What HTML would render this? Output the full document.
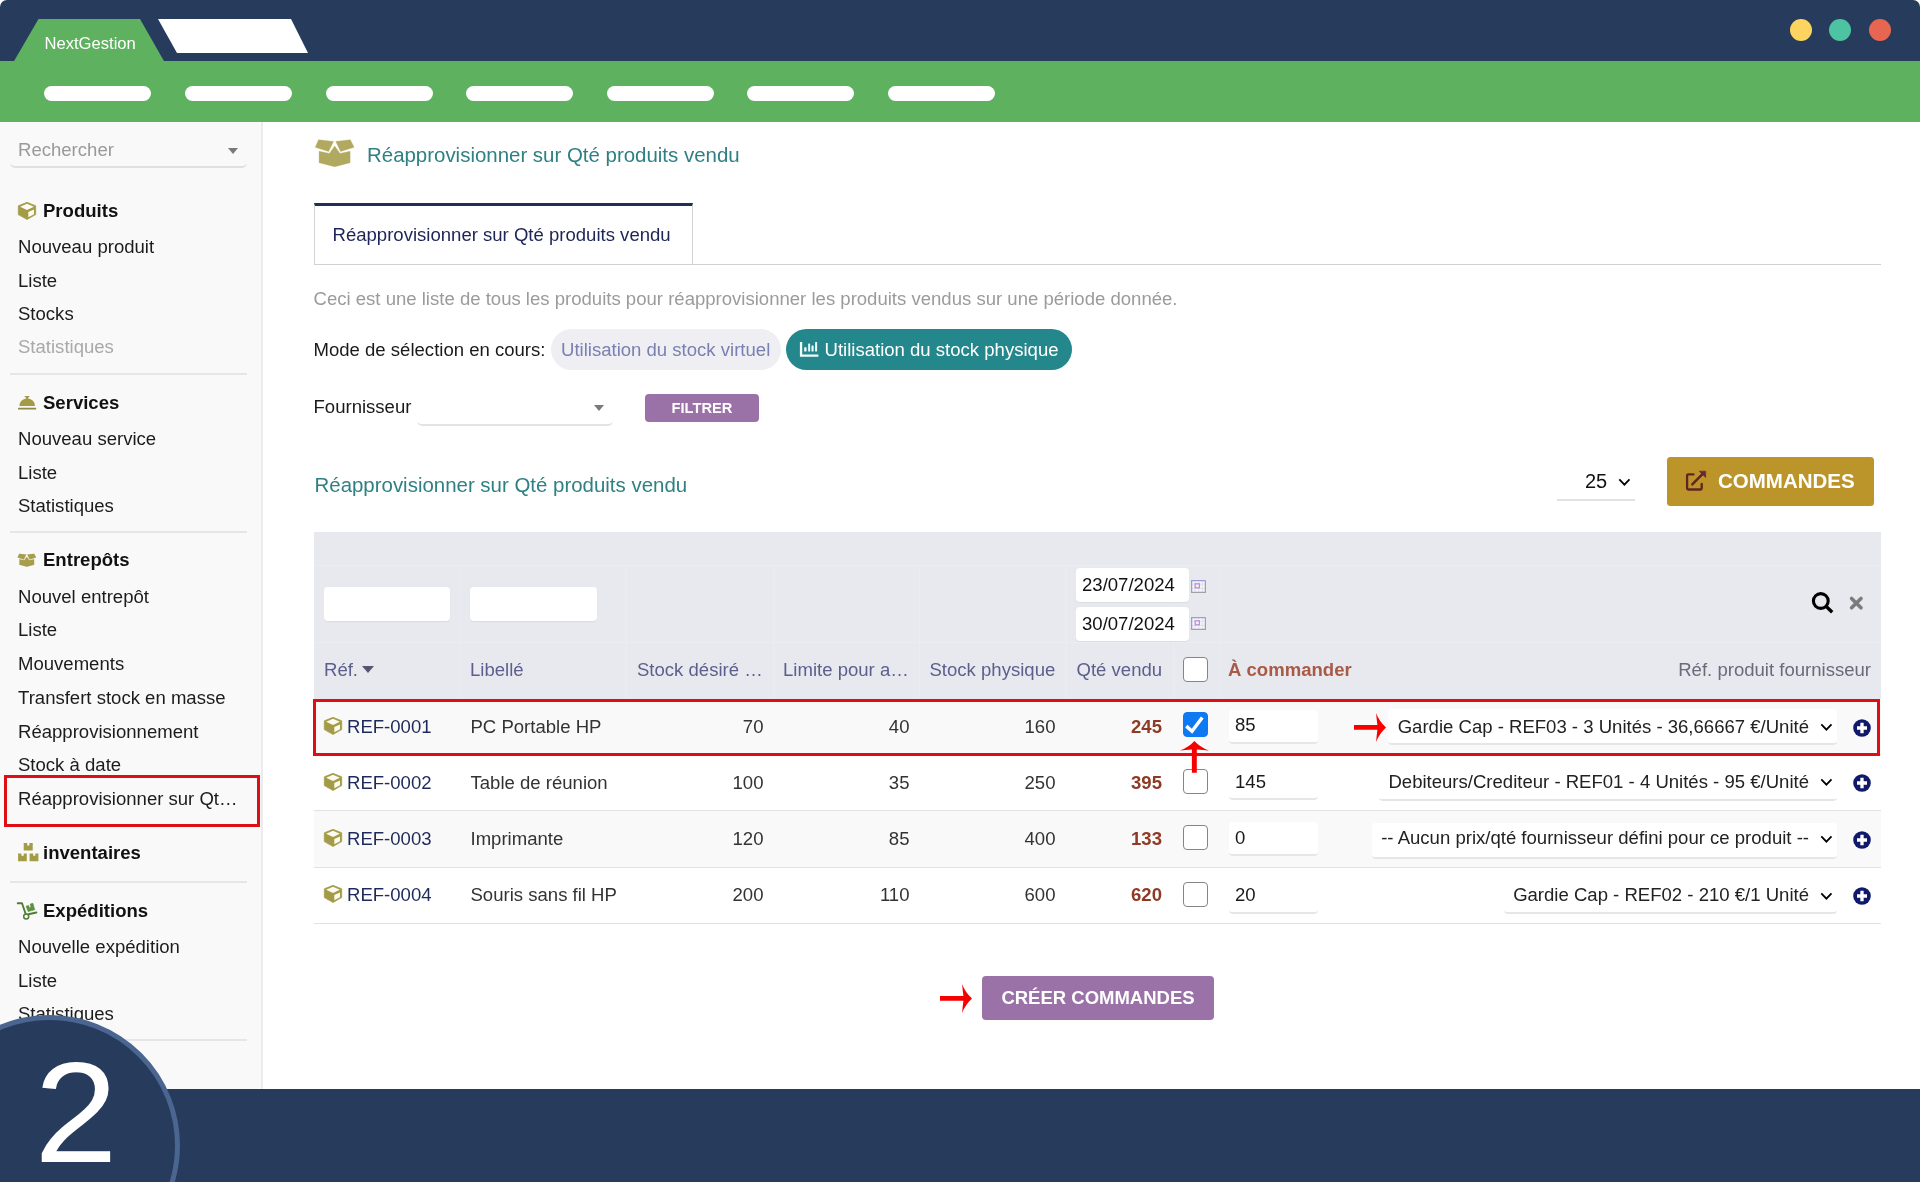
<!DOCTYPE html>
<html lang="fr">
<head>
<meta charset="utf-8">
<title>NextGestion</title>
<style>
*{box-sizing:border-box;margin:0;padding:0}
html,body{width:1920px;height:1182px;overflow:hidden;background:#fff}
body{font-family:"Liberation Sans",sans-serif;font-size:18.56px;color:#222;position:relative}
#wrap{position:absolute;left:0;top:0;width:1920px;height:1182px;overflow:hidden;will-change:transform}
.abs{position:absolute}
.t{position:absolute;white-space:nowrap;line-height:24px;height:24px}
/* chrome */
#topbar{left:0;top:0;width:1920px;height:62px;background:#273b5d;border-radius:7px 7px 0 0}
#greenbar{left:0;top:61px;width:1920px;height:61px;background:#5eb15f}
.pill{position:absolute;top:86px;height:15px;width:107px;border-radius:8px;background:#fff}
.dot{position:absolute;top:19px;width:22px;height:22px;border-radius:50%}
#bottombar{left:0;top:1089px;width:1920px;height:93px;background:#273b5d}
#circle{left:-81px;top:1015px;width:261px;height:261px;border-radius:50%;background:#273b5d;border:5px solid #4a6590}
#two{left:35.8px;top:1037.4px;font-size:143.5px;line-height:150px;height:150px;color:#fff;transform:scaleX(1.045);transform-origin:50% 50%}
/* sidebar */
#side{left:0;top:122px;width:263px;height:967px;background:#f9f9f9;border-right:2px solid #ececec}
.sh{font-weight:bold;color:#111;left:43px}
.si{color:#1c1c1c;left:18px}
.hr{position:absolute;left:10px;width:237px;height:2px;background:#e6e6e6}
.ico{position:absolute}

/* main */
#h1{left:367px;top:142.5px;font-size:20.45px;color:#2f8083}
#tab{left:314px;top:203px;width:379px;height:62px;border:1.5px solid #d5d5d5;border-top:3.5px solid #1e2f56;border-bottom:none;background:#fff}
#tabline{left:314px;top:263.5px;width:1567px;height:1.5px;background:#d0d0d0}
#tabtxt{left:332.5px;top:222.5px;font-size:18.56px;color:#1d2456}
#desc{left:313.5px;top:287px;color:#9b9b9b}
.chip{position:absolute;top:329px;height:41px;border-radius:21px}
.btn{position:absolute;color:#fff;font-weight:bold;border-radius:4px;text-align:center}
/* table */
#thead{left:314px;top:532px;width:1567px;height:167px;background:#e8e9ee}
.vl{position:absolute;width:1px;background:#ebecf1;top:565px;height:134px}
.hl{position:absolute;left:314px;width:1567px;height:1px;background:#ebecf1}
.fin{position:absolute;background:#fff;border-radius:4px;box-shadow:0 1px 1px rgba(0,0,0,.06)}
.th{color:#5b5f8d}
.row{position:absolute;left:314px;width:1567px;height:56px;border-bottom:1.5px solid #e2e2e2}
.odd{background:#f9f9f9}
.ref{color:#1f2a5c}
.lib{color:#333}
.num{color:#333;text-align:right}
.qv{color:#8e3b26;font-weight:bold;text-align:right}
.cb{position:absolute;left:1182.7px;width:25.2px;height:25px;border:1.7px solid #858585;border-radius:4px;background:#fff}
.qin{position:absolute;left:1229px;width:89px;height:34px;background:#fff;border-radius:4px;border-bottom:2px solid #e6e6e6}
.sel{position:absolute;height:36px;background:#fff;border-radius:4px;border-bottom:2px solid #e6e6e6}
.selt{color:#222;text-align:right}
</style>
</head>
<body>
<div id="wrap">
<svg width="0" height="0" style="position:absolute">
<defs>
<g id="i-cube"><path d="M10 1.3 L18.7 4.8 L18.7 13.6 L10 18.5 L1.3 13.6 L1.3 4.8 Z" fill="#a39b46" stroke="#a39b46" stroke-width="0.7" stroke-linejoin="round"/><path d="M10 2.7 L16.9 5.8 L10 9 L3.1 5.8 Z" fill="#fcfcf4"/><path d="M11.3 10.9 L17 8.4 L17 13.2 L11.3 16.2 Z" fill="#fcfcf4"/></g>
<g id="i-plus"><circle cx="9" cy="9" r="8.8" fill="#11196a"/><path d="M9 3.8 V14.2 M4 9 H14" stroke="#fff" stroke-width="3.3"/></g>
<g id="i-box"><path d="M4.5 1.8 L19.5 3.4 L14.6 13.5 L1.3 9.3 Z M36.3 1.8 L21.8 3.4 L26.6 13.5 L40.1 9.3 Z M5.1 13.3 L15.4 15.4 L20.7 8 L26 15.4 L36.1 13.3 L36.1 24.7 L20.7 28.7 L5.1 24.7 Z" stroke-width="0.35" stroke-linejoin="round"/></g>
<g id="i-bell"><rect x="7.6" y="0.9" width="4.8" height="1.4" rx="0.6" fill="#a39b46"/><rect x="8.9" y="2" width="2.4" height="2.4" fill="#a39b46"/><path d="M2.4 10.9 A7.8 7.5 0 0 1 18 10.9 Z" fill="#a39b46"/><rect x="1" y="12.7" width="18.2" height="1.8" rx="0.6" fill="#8f8a48"/></g>
<g id="i-boxes" fill="#a39b46"><path d="M6.7 1 H10.2 V3.6 H12.4 V1 H15.7 V8.6 H6.7 Z"/><path d="M1.1 11.4 H4.4 V13.8 H6.7 V11.4 H9.8 V19.3 H1.1 Z"/><path d="M12.6 11.4 H16.2 V13.8 H18.3 V11.4 H21.4 V19.3 H12.6 Z"/></g>
<g id="i-dolly"><path d="M1.7 3.3 H6 L9.7 14" fill="none" stroke="#4f7d35" stroke-width="1.9" stroke-linecap="round" stroke-linejoin="round"/><circle cx="10.2" cy="16.4" r="2.5" fill="none" stroke="#4f7d35" stroke-width="1.5"/><path d="M12.4 14.3 L20.4 12.5" stroke="#4f7d35" stroke-width="1.9" stroke-linecap="round"/><path d="M10.1 6.2 L12.6 5.5 L13.3 7.8 L15 7.4 L14.2 4.1 L16.9 3.3 L18.7 9.7 L12.1 11.6 Z" fill="#5d9440" stroke="#55883a" stroke-width="0.6" stroke-linejoin="round"/></g>
<g id="i-chart" fill="#f2ffff"><path d="M0.9 1.1 h2.3 v12.4 h16.2 v2.3 h-18.5 z"/><rect x="5.2" y="6.2" width="2.3" height="4.3" rx="0.6"/><rect x="9.2" y="2.4" width="1.9" height="8.1" rx="0.6"/><rect x="12.5" y="4.4" width="2.1" height="6.1" rx="0.6"/><rect x="16.1" y="1.1" width="2" height="9.4" rx="0.6"/></g>
<g id="i-ext"><path d="M9.5 6.4 H4.3 Q3.1 6.4 3.1 7.6 V20.3 Q3.1 21.5 4.3 21.5 H16.5 Q17.7 21.5 17.7 20.3 V15.9" fill="none" stroke="#5f2520" stroke-width="2.3" stroke-linecap="round"/><path d="M8.3 16.3 L18.2 6.4" stroke="#5f2520" stroke-width="2.5" stroke-linecap="round"/><path d="M15.2 3.2 H21.7 V9.6 Z" fill="#65283a" stroke="#65283a" stroke-width="0.6" stroke-linejoin="round"/></g>
<g id="i-search"><circle cx="10.8" cy="11" r="7.4" fill="none" stroke="#000" stroke-width="3.1"/><path d="M16.3 16.6 L22.2 22.2" stroke="#000" stroke-width="3.4"/></g>
<g id="i-x"><path d="M3.6 3.4 L13 12.8 M13 3.4 L3.6 12.8" stroke="#7b7b7d" stroke-width="3.6" stroke-linecap="round"/></g>
<g id="i-cal"><rect x="0.5" y="0.5" width="14" height="12" fill="#f6f5fc"/><path d="M4 1 V12 M7.7 1 V12 M11.3 1 V12 M1 4.2 H14 M1 8.5 H14" stroke="#e1dfee" stroke-width="1"/><path d="M0.5 13 V0.5 H14.5" fill="none" stroke="#9a9dd2" stroke-width="1.5"/><path d="M14.5 0.5 V12.5 H0.5" fill="none" stroke="#a2a2a6" stroke-width="1.5"/><rect x="4.2" y="3.8" width="4.2" height="4" fill="#fdeaff" stroke="#b497cf" stroke-width="1.3"/></g>
<g id="i-arrow"><path d="M2 15 L25.4 15 Q24.6 9 24.1 2.9 Q27 11 34 17.4 Q27 24 24.1 31.9 Q24.6 25.8 25.4 19.8 L2 19.8 Z" fill="#f60000"/></g>
<g id="i-uparrow"><path d="M16.4 1.9 Q22 8 31 11.6 Q25 11 18.8 10.4 L18.8 33.7 L13.9 33.7 L13.9 10.4 Q8 11 1.9 11.6 Q11 8 16.4 1.9 Z" fill="#f60000"/></g>
<g id="i-chev"><path d="M1.3 1.4 L6.4 6.6 L11.5 1.4" fill="none" stroke="#000" stroke-width="1.8"/></g>
</defs></svg>
<!-- ===== window chrome ===== -->
<div id="topbar" class="abs"></div>
<div id="greenbar" class="abs"></div>
<svg class="abs" style="left:0;top:0" width="330" height="62" viewBox="0 0 330 62">
  <polygon points="38.5,19 140,19 164.5,62 13.5,62" fill="#5eb15f"/>
  <polygon points="158,19 291,19 308,53 177,53" fill="#fff"/>
</svg>
<div class="t" style="left:44.5px;top:32px;font-size:16.6px;color:#fff">NextGestion</div>
<div class="pill" style="left:44px"></div>
<div class="pill" style="left:185px"></div>
<div class="pill" style="left:326px"></div>
<div class="pill" style="left:466px"></div>
<div class="pill" style="left:607px"></div>
<div class="pill" style="left:747px"></div>
<div class="pill" style="left:888px"></div>
<div class="dot" style="left:1790px;background:#fdd45f"></div>
<div class="dot" style="left:1829px;background:#4dc3a2"></div>
<div class="dot" style="left:1869px;background:#e76651"></div>

<!-- ===== sidebar ===== -->
<div id="side" class="abs"></div>
<div id="sidebar-items">
<div class="t" style="left:18px;top:138px;color:#9a9a9a">Rechercher</div>
<svg class="ico" style="left:228px;top:147.5px" width="10" height="6" viewBox="0 0 10 6"><polygon points="0,0 10,0 5,6" fill="#7a7a7a"/></svg>
<div class="abs" style="left:10px;top:156.5px;width:237px;height:11px;border-bottom:2px solid #e0e0e0;border-radius:0 0 5px 5px"></div>

<div class="t sh" style="top:199px">Produits</div>
<div class="t si" style="top:235px">Nouveau produit</div>
<div class="t si" style="top:269px">Liste</div>
<div class="t si" style="top:302px">Stocks</div>
<div class="t si" style="top:335px;color:#a9a9a9">Statistiques</div>
<div class="hr" style="top:373px"></div>

<div class="t sh" style="top:391px">Services</div>
<div class="t si" style="top:426.7px">Nouveau service</div>
<div class="t si" style="top:460.7px">Liste</div>
<div class="t si" style="top:494px">Statistiques</div>
<div class="hr" style="top:531px"></div>

<div class="t sh" style="top:548px">Entrepôts</div>
<div class="t si" style="top:585px">Nouvel entrepôt</div>
<div class="t si" style="top:618px">Liste</div>
<div class="t si" style="top:652px">Mouvements</div>
<div class="t si" style="top:686px">Transfert stock en masse</div>
<div class="t si" style="top:719.5px">Réapprovisionnement</div>
<div class="t si" style="top:753px">Stock à date</div>
<div class="t si" style="top:787px">Réapprovisionner sur Qt…</div>
<div class="abs" style="left:4px;top:775px;width:256px;height:52px;border:3px solid #df0d14"></div>

<div class="t sh" style="top:841px">inventaires</div>
<div class="hr" style="top:881px"></div>

<div class="t sh" style="top:899px">Expéditions</div>
<div class="t si" style="top:934.5px">Nouvelle expédition</div>
<div class="t si" style="top:968.5px">Liste</div>
<div class="t si" style="top:1002px">Statistiques</div>
<div class="hr" style="top:1038.5px"></div>
</div>

<!-- ===== main content ===== -->
<div id="main">
<div id="h1" class="t">Réapprovisionner sur Qté produits vendu</div>
<div id="tab" class="abs"></div>
<div id="tabline" class="abs"></div>
<div id="tabtxt" class="t">Réapprovisionner sur Qté produits vendu</div>
<div id="desc" class="t">Ceci est une liste de tous les produits pour réapprovisionner les produits vendus sur une période donnée.</div>

<div class="t" style="left:313.5px;top:338px;color:#1a1a1a">Mode de sélection en cours:</div>
<div class="chip" style="left:551px;width:230px;background:#eeeef3"></div>
<div class="t" style="left:561px;top:338px;color:#7a80b1">Utilisation du stock virtuel</div>
<div class="chip" style="left:786px;width:286px;background:#24878b"></div>
<div class="t" style="left:824.5px;top:338px;color:#fff">Utilisation du stock physique</div>

<div class="t" style="left:313.5px;top:395px;color:#1a1a1a">Fournisseur</div>
<div class="abs" style="left:417px;top:411px;width:196px;height:15px;border-bottom:2px solid #e3e3e3;border-radius:0 0 5px 5px"></div>
<svg class="ico" style="left:594px;top:405px" width="10" height="6" viewBox="0 0 10 6"><polygon points="0,0 10,0 5,6" fill="#7a7a7a"/></svg>
<div class="btn" style="left:645px;top:394px;width:114px;height:28px;background:#9b72a8;font-size:14.7px;line-height:28px">FILTRER</div>

<div class="t" style="left:314.5px;top:473px;font-size:20.45px;color:#2f8083">Réapprovisionner sur Qté produits vendu</div>
<div class="t" style="left:1585px;top:469px;font-size:20px;color:#111">25</div>
<div class="abs" style="left:1557px;top:499.3px;width:78px;height:1.5px;background:#e2e2e2"></div>
<div class="btn" style="left:1667px;top:457px;width:207px;height:49px;background:#bc952a;border-radius:3.5px"></div>
<div class="t" style="left:1718px;top:469px;font-size:20.5px;font-weight:bold;color:#fff">COMMANDES</div>

<!-- table head -->
<div id="thead" class="abs"></div>
<div class="hl" style="top:565px"></div><div class="hl" style="top:642px"></div>
<div class="vl" style="left:460px"></div><div class="vl" style="left:626px"></div><div class="vl" style="left:773px"></div><div class="vl" style="left:919px"></div><div class="vl" style="left:1066px"></div><div class="vl" style="left:1173px"></div><div class="vl" style="left:1219px"></div>
<div class="fin" style="left:324px;top:587px;width:126px;height:34px"></div>
<div class="fin" style="left:470px;top:587px;width:127px;height:34px"></div>
<div class="fin" style="left:1075.5px;top:568px;width:113px;height:34px"></div>
<div class="fin" style="left:1075.5px;top:606.5px;width:113px;height:34px"></div>
<div class="t" style="left:1082px;top:573px;color:#111">23/07/2024</div>
<div class="t" style="left:1082px;top:612px;color:#111">30/07/2024</div>

<div class="t th" style="left:324px;top:657.5px">Réf.</div>
<svg class="ico" style="left:362px;top:666px" width="12" height="7" viewBox="0 0 12 7"><polygon points="0,0 12,0 6,7" fill="#55566f"/></svg>
<div class="t th" style="left:470px;top:657.5px">Libellé</div>
<div class="t th" style="left:637px;top:657.5px">Stock désiré …</div>
<div class="t th" style="left:783px;top:657.5px">Limite pour a…</div>
<div class="t th" style="left:929.5px;top:657.5px">Stock physique</div>
<div class="t th" style="left:1076.5px;top:657.5px">Qté vendu</div>
<div class="cb" style="top:656.8px"></div>
<div class="t" style="left:1228px;top:657.5px;color:#a95a47;font-weight:bold">À commander</div>
<div class="t" style="left:1571px;width:300px;text-align:right;top:657.5px;color:#686b7a">Réf. produit fournisseur</div>

<!-- rows -->
<div class="row odd" style="top:699px;height:56.2px"></div>
<div class="row" style="top:755.2px;height:56.2px"></div>
<div class="row odd" style="top:811.4px;height:56.2px"></div>
<div class="row" style="top:867.6px;height:56.2px"></div>
<!-- row 1 -->
<svg class="ico" style="left:322.5px;top:716.0px" width="20" height="20" viewBox="0 0 20 20"><use href="#i-cube"/></svg>
<div class="t ref" style="left:347px;top:714.5px">REF-0001</div>
<div class="t lib" style="left:470.5px;top:714.5px">PC Portable HP</div>
<div class="t num" style="left:663.5px;width:100px;top:714.5px">70</div>
<div class="t num" style="left:809.5px;width:100px;top:714.5px">40</div>
<div class="t num" style="left:955.5px;width:100px;top:714.5px">160</div>
<div class="t qv" style="left:1062px;width:100px;top:714.5px">245</div>
<div class="cb" style="top:712px;background:#0d79f2;border-color:#0d79f2"><svg width="25" height="25" viewBox="0 0 25 25" style="position:absolute;left:-1.5px;top:-1.5px"><path d="M4.3 14.1 L10 19.2 L20.3 5.5" fill="none" stroke="#fff" stroke-width="3.5"/></svg></div>
<div class="qin" style="top:709.6px"></div>
<div class="t" style="left:1235px;top:712.6px;color:#1a1a1a">85</div>
<div class="sel" style="right:83px;top:709px;padding:0 29px 0 8.5px"><span style="visibility:hidden;line-height:34px;white-space:nowrap">Gardie Cap - REF03 - 3 Unités - 36,66667 €/Unité</span></div>
<div class="t selt" style="left:1209px;width:600px;top:714.9px">Gardie Cap - REF03 - 3 Unités - 36,66667 €/Unité</div>
<svg class="ico" style="left:1820px;top:722.5px" width="13" height="8" viewBox="0 0 13 8"><use href="#i-chev"/></svg>
<svg class="ico" style="left:1853px;top:718.9px" width="18" height="18" viewBox="0 0 18 18"><use href="#i-plus"/></svg>
<!-- row 2 -->
<svg class="ico" style="left:322.5px;top:772.0px" width="20" height="20" viewBox="0 0 20 20"><use href="#i-cube"/></svg>
<div class="t ref" style="left:347px;top:770.5px">REF-0002</div>
<div class="t lib" style="left:470.5px;top:770.5px">Table de réunion</div>
<div class="t num" style="left:663.5px;width:100px;top:770.5px">100</div>
<div class="t num" style="left:809.5px;width:100px;top:770.5px">35</div>
<div class="t num" style="left:955.5px;width:100px;top:770.5px">250</div>
<div class="t qv" style="left:1062px;width:100px;top:770.5px">395</div>
<div class="cb" style="top:769px"></div>
<div class="qin" style="top:766px"></div>
<div class="t" style="left:1235px;top:769.5px;color:#1a1a1a">145</div>
<div class="sel" style="right:83px;top:765.2px;padding:0 29px 0 8.5px"><span style="visibility:hidden;line-height:34px;white-space:nowrap">Debiteurs/Crediteur - REF01 - 4 Unités - 95 €/Unité</span></div>
<div class="t selt" style="left:1209px;width:600px;top:769.9px">Debiteurs/Crediteur - REF01 - 4 Unités - 95 €/Unité</div>
<svg class="ico" style="left:1820px;top:778.2px" width="13" height="8" viewBox="0 0 13 8"><use href="#i-chev"/></svg>
<svg class="ico" style="left:1853px;top:774px" width="18" height="18" viewBox="0 0 18 18"><use href="#i-plus"/></svg>
<!-- row 3 -->
<svg class="ico" style="left:322.5px;top:828.1px" width="20" height="20" viewBox="0 0 20 20"><use href="#i-cube"/></svg>
<div class="t ref" style="left:347px;top:826.6px">REF-0003</div>
<div class="t lib" style="left:470.5px;top:826.6px">Imprimante</div>
<div class="t num" style="left:663.5px;width:100px;top:826.6px">120</div>
<div class="t num" style="left:809.5px;width:100px;top:826.6px">85</div>
<div class="t num" style="left:955.5px;width:100px;top:826.6px">400</div>
<div class="t qv" style="left:1062px;width:100px;top:826.6px">133</div>
<div class="cb" style="top:825.2px"></div>
<div class="qin" style="top:822.2px"></div>
<div class="t" style="left:1235px;top:825.7px;color:#1a1a1a">0</div>
<div class="sel" style="right:83px;top:822.8px;padding:0 29px 0 8.5px"><span style="visibility:hidden;line-height:34px;white-space:nowrap">-- Aucun prix/qté fournisseur défini pour ce produit --</span></div>
<div class="t selt" style="left:1209px;width:600px;top:826.2px">-- Aucun prix/qté fournisseur défini pour ce produit --</div>
<svg class="ico" style="left:1820px;top:835px" width="13" height="8" viewBox="0 0 13 8"><use href="#i-chev"/></svg>
<svg class="ico" style="left:1853px;top:830.7px" width="18" height="18" viewBox="0 0 18 18"><use href="#i-plus"/></svg>
<!-- row 4 -->
<svg class="ico" style="left:322.5px;top:884.2px" width="20" height="20" viewBox="0 0 20 20"><use href="#i-cube"/></svg>
<div class="t ref" style="left:347px;top:882.7px">REF-0004</div>
<div class="t lib" style="left:470.5px;top:882.7px">Souris sans fil HP</div>
<div class="t num" style="left:663.5px;width:100px;top:882.7px">200</div>
<div class="t num" style="left:809.5px;width:100px;top:882.7px">110</div>
<div class="t num" style="left:955.5px;width:100px;top:882.7px">600</div>
<div class="t qv" style="left:1062px;width:100px;top:882.7px">620</div>
<div class="cb" style="top:882px"></div>
<div class="qin" style="top:879.5px"></div>
<div class="t" style="left:1235px;top:883px;color:#1a1a1a">20</div>
<div class="sel" style="right:83px;top:877.9px;padding:0 29px 0 8.5px"><span style="visibility:hidden;line-height:34px;white-space:nowrap">Gardie Cap - REF02 - 210 €/1 Unité</span></div>
<div class="t selt" style="left:1209px;width:600px;top:883px">Gardie Cap - REF02 - 210 €/1 Unité</div>
<svg class="ico" style="left:1820px;top:891.7px" width="13" height="8" viewBox="0 0 13 8"><use href="#i-chev"/></svg>
<svg class="ico" style="left:1853px;top:887.2px" width="18" height="18" viewBox="0 0 18 18"><use href="#i-plus"/></svg>
<!-- red highlight -->
<div class="abs" style="left:313px;top:699px;width:1567px;height:57px;border:3px solid #df0d14"></div>
<!-- bottom button -->
<div class="btn" style="left:982px;top:976px;width:232px;height:44px;background:#9b72a8;font-size:18.5px;line-height:44px;border-radius:4px">CRÉER COMMANDES</div>
</div>


<!-- icons -->
<svg class="ico" style="left:314px;top:138px" width="42" height="30" viewBox="0 0 42 30"><use href="#i-box" fill="#b0a95f" stroke="#b0a95f"/></svg>
<svg class="ico" style="left:16.7px;top:200.9px" width="20" height="20" viewBox="0 0 20 20"><use href="#i-cube"/></svg>
<svg class="ico" style="left:16.7px;top:394.9px" width="20" height="16" viewBox="0 0 20 16"><use href="#i-bell"/></svg>
<svg class="ico" style="left:17.4px;top:553.1px" width="19.95" height="14.25" viewBox="0 0 42 30"><use href="#i-box" fill="#a69e4c" stroke="#a69e4c"/></svg>
<svg class="ico" style="left:16.7px;top:842.2px" width="24" height="20" viewBox="0 0 24 20"><use href="#i-boxes"/></svg>
<svg class="ico" style="left:16px;top:900px" width="22" height="20" viewBox="0 0 22 20"><use href="#i-dolly"/></svg>
<svg class="ico" style="left:799px;top:341px" width="20" height="16" viewBox="0 0 20 16"><use href="#i-chart"/></svg>
<svg class="ico" style="left:1684px;top:468px" width="24" height="24" viewBox="0 0 24 24"><use href="#i-ext"/></svg>
<svg class="ico" style="left:1810px;top:590px" width="25" height="25" viewBox="0 0 25 25"><use href="#i-search"/></svg>
<svg class="ico" style="left:1848px;top:595px" width="17" height="17" viewBox="0 0 17 17"><use href="#i-x"/></svg>
<svg class="ico" style="left:1190.5px;top:579.7px" width="15" height="13" viewBox="0 0 15 13"><use href="#i-cal"/></svg>
<svg class="ico" style="left:1190.5px;top:617.4px" width="15" height="13" viewBox="0 0 15 13"><use href="#i-cal"/></svg>
<svg class="ico" style="left:1618px;top:478px" width="13" height="8" viewBox="0 0 13 8"><use href="#i-chev"/></svg>
<svg class="ico" style="left:1352px;top:710px" width="36" height="35" viewBox="0 0 36 35"><use href="#i-arrow"/></svg>
<svg class="ico" style="left:938px;top:980.7px" width="36" height="35" viewBox="0 0 36 35"><use href="#i-arrow"/></svg>
<svg class="ico" style="left:1178px;top:739px" width="33" height="36" viewBox="0 0 33 36"><use href="#i-uparrow"/></svg>
<!-- ===== bottom ===== -->
<div id="bottombar" class="abs"></div>
<div id="circle" class="abs"></div>
<div id="two" class="t">2</div>
</div>
</body>
</html>
